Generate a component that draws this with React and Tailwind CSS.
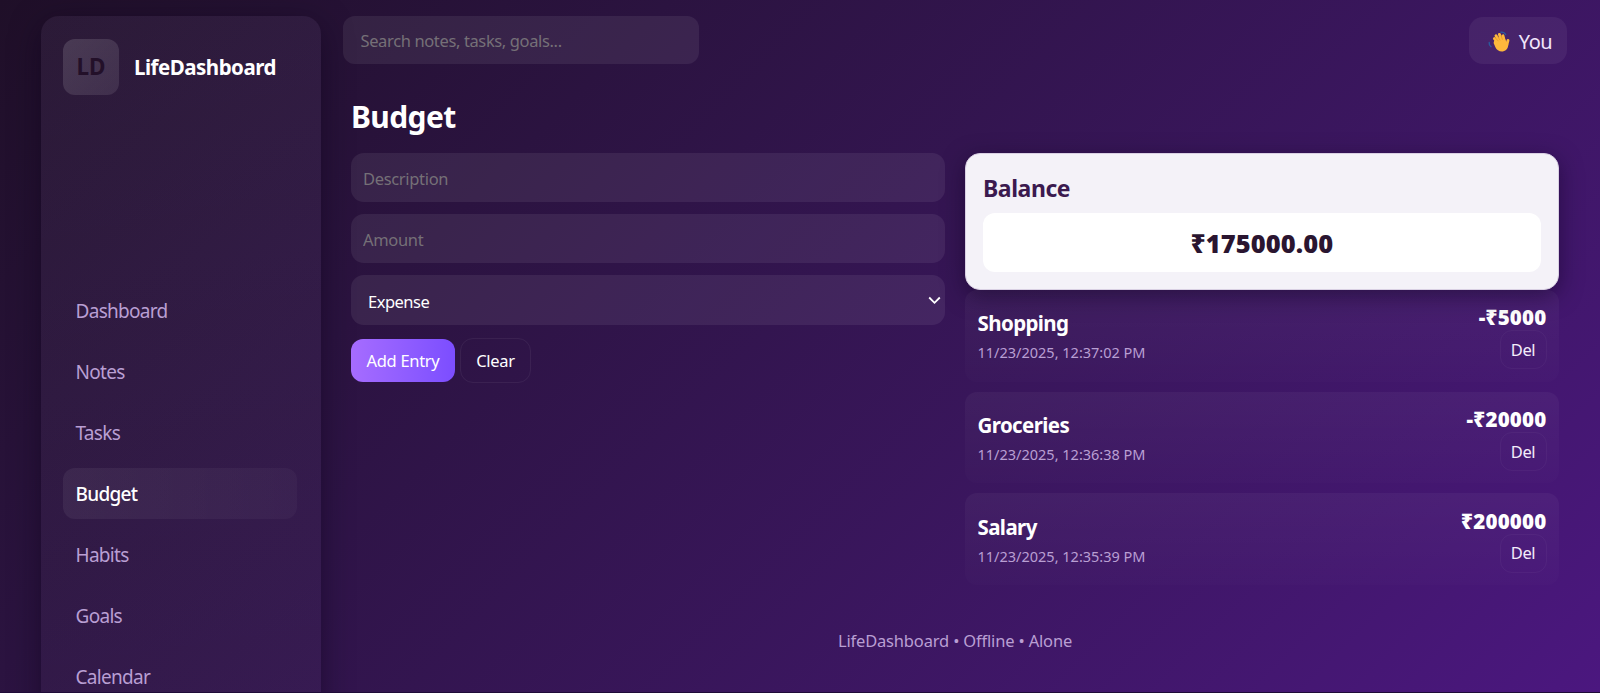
const navItems = [
    "Dashboard",
    "Notes",
    "Tasks",
    "Budget",
    "Habits",
    "Goals",
    "Calendar",
];

const entries = [
    { title: "Shopping", date: "11/23/2025, 12:37:02 PM", amount: "-₹5000" },
    { title: "Groceries", date: "11/23/2025, 12:36:38 PM", amount: "-₹20000" },
    { title: "Salary", date: "11/23/2025, 12:35:39 PM", amount: "₹200000" },
];

function Sidebar() {
    return (
        <aside className="h-[760px] w-[280px] shrink-0 rounded-[18px] bg-linear-to-b from-[#d9c2ff]/6 to-[#d9c2ff]/3 px-[22.5px] pt-[23px] shadow-[0_8px_30px_rgba(12,3,26,0.5)]">
            <div className="flex items-center gap-[15px]">
                <div className="flex size-14 items-center justify-center rounded-xl bg-linear-135 from-white/14 to-white/9 text-[22.5px] font-bold text-[#231029]">
                    LD
                </div>
                <span className="mt-px text-[20.5px] font-bold tracking-[-0.5px] text-white">
                    LifeDashboard
                </span>
            </div>
            <nav className="mt-[190px] flex flex-col gap-[10px]">
                {navItems.map((item) => (
                    <a
                        key={item}
                        className={`flex h-[51px] w-[234px] items-center rounded-xl px-[12.5px] pt-[2px] text-[19px] tracking-[-0.7px] ${
                            item === "Budget"
                                ? "bg-linear-to-r from-white/6 to-white/3 font-medium text-white"
                                : "text-[#b99fd3]"
                        }`}
                    >
                        {item}
                    </a>
                ))}
            </nav>
        </aside>
    );
}

function WavingHand() {
    return (
        <svg className="mr-[9px]" width="22" height="21" viewBox="0 0 22 21">
            <g fill="none" stroke="#2b5b9e" strokeWidth="1.4" strokeLinecap="round">
                <path d="M1.2 11.5q-.3 2.8 1.8 4.2" />
                <path d="M13 1.2q3-.6 4.6 2.2" />
            </g>
            <g
                fill="none"
                stroke="#fdb83c"
                strokeWidth="2.9"
                strokeLinecap="round"
            >
                <path d="M11.5 12 6.4 7.6" />
                <path d="M12 11 8 4.8" />
                <path d="M14 10 11.4 3.4" />
                <path d="M16.5 11 15 4.8" />
                <path d="M18.6 14.5 20 9.4" />
            </g>
            <path
                fill="#fdb83c"
                d="M6.2 9.6 9 6.5l7.4 0 2 4.6 1.8 1.4c.4 4-1.6 7.4-5.4 7.9-3.4.4-6.2-1.6-7.4-4.2L5.6 12z"
            />
            <path
                fill="none"
                stroke="#e08a1e"
                strokeWidth=".6"
                strokeLinecap="round"
                d="m7.6 7.2 2.6 2.7M9.9 5.6l2 3.4M13.2 4.9l1.2 3.4"
            />
        </svg>
    );
}

function TopBar() {
    return (
        <header className="flex h-12 items-center justify-between">
            <input
                className="h-12 w-[356px] rounded-xl bg-white/7 px-[17.5px] pt-px text-[16.5px] tracking-[-0.37px] placeholder:text-[#757077]"
                placeholder="Search notes, tasks, goals..."
            />
            <div className="mt-px flex h-[47px] w-[98px] items-center justify-center rounded-[14px] bg-white/6 pt-px pl-[4px] text-[20px] tracking-[-0.5px] text-[#f1e6fb]">
                <WavingHand />
                <span className="pt-[2px]">You</span>
            </div>
        </header>
    );
}

function EntryForm() {
    const field =
        "h-[49px] w-full rounded-[13px] bg-white/7 px-3 pt-px text-[16.5px] tracking-[-0.33px] placeholder:text-[#757077]";
    return (
        <form className="flex flex-col">
            <input className={field} placeholder="Description" />
            <input className={`${field} mt-3`} placeholder="Amount" />
            <div className="mt-3 flex h-[50px] items-center justify-between rounded-[13px] bg-white/7 pr-1 pl-[17px] text-[16.5px] tracking-[-0.5px] text-white">
                <span className="pt-[4px]">Expense</span>
                <svg
                    width="13"
                    height="9"
                    viewBox="0 0 13 9"
                    fill="none"
                    stroke="white"
                    strokeWidth="1.8"
                >
                    <path d="M1.2 1.5 6.5 6.8 11.8 1.5" />
                </svg>
            </div>
            <div className="mt-[13px] flex items-center gap-[5px]">
                <button
                    type="button"
                    className="h-[43px] w-[104px] rounded-xl bg-linear-to-r from-[#a66cff] to-[#7c4dff] pt-[2px] text-[16.5px] tracking-[-0.3px] text-white"
                >
                    Add Entry
                </button>
                <button
                    type="button"
                    className="h-[45px] w-[71px] rounded-[13px] border border-white/6 pt-[2px] text-[16.5px] tracking-[-0.3px] text-white"
                >
                    Clear
                </button>
            </div>
        </form>
    );
}

function Entry({ title, date, amount }) {
    return (
        <li className="flex h-[91.7px] items-center justify-between rounded-xl bg-linear-to-b from-white/4 to-white/1 px-[12.5px]">
            <div className="pt-[2px]">
                <div className="text-[20.5px] leading-[26px] font-bold tracking-[-0.6px] text-white">
                    {title}
                </div>
                <div className="mt-[5px] text-[14.5px] leading-[22px] text-[#b99fd3]">
                    {date}
                </div>
            </div>
            <div className="flex flex-col items-end pt-[2px]">
                <div className="text-[20.5px] leading-[26px] font-black tracking-[0.2px] text-white">
                    {amount}
                </div>
                <button
                    type="button"
                    className="h-[39px] w-[47px] rounded-xl border border-white/4 pt-px text-[16.5px] tracking-[-0.4px] text-[#f4ecfb]"
                >
                    Del
                </button>
            </div>
        </li>
    );
}

function BalancePanel() {
    return (
        <div>
            <div className="relative h-[137px] rounded-[15px] border border-[#d9d0e3] bg-[#f4f2f8] px-[17px] pt-[18px] shadow-[0_6px_22px_rgba(16,4,34,0.5)]">
                <h3 className="text-[23px] leading-[32px] font-bold tracking-[-0.45px] text-[#3b1a4f]">
                    Balance
                </h3>
                <div className="mt-[9px] flex h-[59px] items-center justify-center rounded-xl bg-white pt-[2px] text-[25.5px] font-black tracking-[0.05px] text-[#2a1530]">
                    ₹175000.00
                </div>
            </div>
            <ul className="flex flex-col gap-[10px]">
                {entries.map((entry) => (
                    <Entry key={entry.title} {...entry} />
                ))}
            </ul>
        </div>
    );
}

function App() {
    return (
        <div className="flex h-[693px] gap-[22.5px] overflow-hidden border-b border-[#1f0b38] bg-linear-135 from-[#1f0f28] to-[#4b177f] pt-4 pr-[33px] pl-[40.5px] font-['Noto_Sans','Open_Sans',sans-serif]">
            <Sidebar />
            <main className="flex-1">
                <TopBar />
                <section className="px-2">
                    <h1 className="mt-[33px] text-[30px] leading-[40px] font-bold tracking-[-0.6px] text-white">
                        Budget
                    </h1>
                    <div className="mt-4 grid grid-cols-2 gap-5">
                        <EntryForm />
                        <BalancePanel />
                    </div>
                </section>
                <footer className="mt-[44px] text-center text-[16.5px] tracking-[-0.17px] text-[#b99fd3]">
                    LifeDashboard • Offline • Alone
                </footer>
            </main>
        </div>
    );
}

export default App;
